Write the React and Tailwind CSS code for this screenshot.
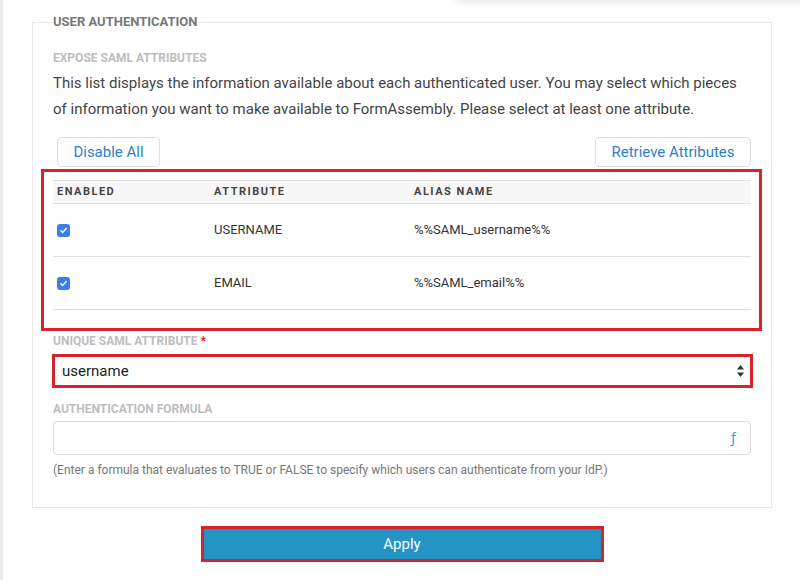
const rows = [
  { attr: "USERNAME", alias: "%%SAML_username%%" },
  { attr: "EMAIL", alias: "%%SAML_email%%" },
];

const Check = () => (
  <span className="flex h-[13px] w-[13px] items-center justify-center rounded-[3px] bg-[#3a7ee8]">
    <svg width="9" height="9" viewBox="0 0 10 10" fill="none">
      <path d="M2 5.2l2 2 4-4.4" stroke="white" strokeWidth="1.6" strokeLinecap="round" strokeLinejoin="round" />
    </svg>
  </span>
);

const App = () => {
  return (
    <div className="relative flex min-h-[580px] overflow-hidden bg-white font-['Roboto','Liberation_Sans',sans-serif]">
      {/* bottom edge of a floating panel above the page */}
      <div className="absolute -top-[30px] left-[455px] -right-[20px] h-[30px] rounded-bl-md bg-white shadow-[0_2px_8px_rgba(0,0,0,0.10)]"></div>

      <div className="w-[3px] bg-[#ebebeb]"></div>

      <div className="w-[769px] pl-[29px]">
        <fieldset className="mt-[14px] min-w-0 w-[740px] border border-[#e8e8e8] px-[20px] pt-[20px] pb-[29px]">
          <legend className="text-[13px] font-bold uppercase leading-4 text-[#777]">
            User Authentication
          </legend>

          <div className="text-[12px] font-bold uppercase leading-4 text-[#bdbdbd]">
            Expose SAML Attributes
          </div>
          <p className="mt-1 text-[15px] leading-[26px] text-[#444]">
            This list displays the information available about each authenticated user. You may select which pieces
            of information you want to make available to FormAssembly. Please select at least one attribute.
          </p>

          <div className="mt-[15px] flex justify-between pl-1">
            <button className="h-[30px] w-[103px] rounded-[4px] border border-[#dedede] text-[15px] text-[#2d7fc7]">
              Disable All
            </button>
            <button className="h-[30px] w-[156px] rounded-[4px] border border-[#dedede] text-[15px] text-[#2d7fc7]">
              Retrieve Attributes
            </button>
          </div>

          <div className="relative mt-[13px]">
            <div className="grid h-[24px] grid-cols-[157px_200px_1fr] items-center border-y border-[#e2e2e2] bg-[#f7f7f7] text-[11px] font-bold uppercase tracking-[1.5px] text-[#444]">
              <span className="pl-1">Enabled</span>
              <span className="pl-1">Attribute</span>
              <span className="pl-1">Alias Name</span>
            </div>
            {rows.map((row) => (
              <div
                key={row.attr}
                className="grid h-[53px] grid-cols-[157px_200px_1fr] items-center border-b border-[#dedede] text-[13px] text-[#333]"
              >
                <span className="pl-1">
                  <Check />
                </span>
                <span className="pl-1">{row.attr}</span>
                <span className="pl-1">{row.alias}</span>
              </div>
            ))}
            <div className="pointer-events-none absolute -top-[11px] -right-[11px] -bottom-[21px] -left-[12px] border-[3px] border-[#d7232b]"></div>
          </div>

          <div className="mt-[23px] text-[12px] font-bold uppercase leading-4 text-[#bdbdbd]">
            Unique SAML Attribute <span className="text-[#d7232b]">*</span>
          </div>
          <div className="mt-[5px] -ml-px flex h-[34px] w-[701px] items-center justify-between border-[3px] border-[#d7232b] pl-[7px] pr-[5px] text-[15px] text-[#222]">
            <span>username</span>
            <svg width="9" height="14" viewBox="0 0 9 14" fill="#333">
              <path d="M4.5 1L8 5.5H1z" />
              <path d="M4.5 13L1 8.5h7z" />
            </svg>
          </div>

          <div className="mt-[13px] text-[12px] font-bold uppercase leading-4 text-[#bdbdbd]">
            Authentication Formula
          </div>
          <div className="mt-1 flex h-[34px] items-center justify-end rounded-[4px] border border-[#dcdcdc] pr-[14px]">
            <span className="font-['DejaVu_Sans',sans-serif] text-[14px] text-[#4b9cd3]">ƒ</span>
          </div>
          <div className="mt-[7px] text-[12px] leading-4 text-[#777]">
            (Enter a formula that evaluates to TRUE or FALSE to specify which users can authenticate from your IdP.)
          </div>
        </fieldset>

        <div className="mt-[18px] flex justify-center">
          <button className="h-[36px] w-[403px] border-[3px] border-[#d7232b] bg-[#2394c4] text-[15px] text-white">
            Apply
          </button>
        </div>
      </div>
    </div>
  );
};

export default App;
